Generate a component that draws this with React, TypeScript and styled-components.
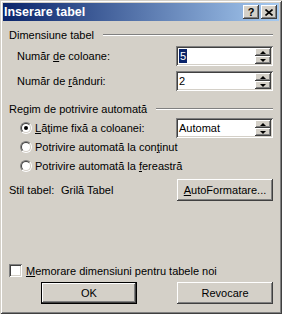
import styled, { createGlobalStyle } from "styled-components";

const GlobalStyle = createGlobalStyle`
  body {
    margin: 0;
    padding: 0;
    background: #d4d0c8;
    font-family: "Liberation Sans", Arial, Helvetica, sans-serif;
    font-size: 11px;
    color: #000;
  }
`;

const raised = `
  box-shadow: inset -1px -1px 0 #404040, inset 1px 1px 0 #ffffff,
    inset -2px -2px 0 #808080, inset 2px 2px 0 #d4d0c8;
`;

const sunken = `
  box-shadow: inset 1px 1px 0 #808080, inset -1px -1px 0 #ffffff,
    inset 2px 2px 0 #404040, inset -2px -2px 0 #d4d0c8;
`;

const Window = styled.div`
  width: 282px;
  height: 314px;
  box-sizing: border-box;
  padding: 3px;
  display: flex;
  flex-direction: column;
  background: #d4d0c8;
  box-shadow: inset 1px 1px 0 #d4d0c8, inset -1px -1px 0 #404040,
    inset 2px 2px 0 #ffffff, inset -2px -2px 0 #808080;
`;

const TitleBar = styled.div`
  height: 18px;
  display: flex;
  align-items: center;
  padding: 0 2px 0 1px;
  background: linear-gradient(90deg, #0a246a 0%, #a6caf0 100%);
`;

const TitleText = styled.div`
  flex: 1;
  color: #fff;
  font-weight: bold;
  font-size: 12.5px;
  white-space: nowrap;
`;

const TitleButton = styled.div<{ $gap?: number }>`
  width: 16px;
  height: 14px;
  box-sizing: border-box;
  margin-left: ${(p) => p.$gap ?? 0}px;
  display: flex;
  align-items: center;
  justify-content: center;
  background: #d4d0c8;
  font-weight: bold;
  font-size: 11px;
  line-height: 1;
  ${raised}
`;

const Body = styled.div`
  flex: 1;
  display: flex;
  flex-direction: column;
  padding: 0 6px 7px 6px;
`;

const GroupHeader = styled.div<{ $top: number }>`
  display: flex;
  align-items: center;
  height: 14px;
  margin-top: ${(p) => p.$top}px;
  white-space: nowrap;
`;

const GroupLine = styled.div`
  flex: 1;
  margin-left: 9px;
  border-top: 1px solid #808080;
  border-bottom: 1px solid #ffffff;
`;

const FieldRow = styled.div<{ $top: number }>`
  display: flex;
  align-items: center;
  justify-content: space-between;
  height: 20px;
  margin-top: ${(p) => p.$top}px;
  padding-left: 8px;
`;

const SpinBox = styled.div`
  width: 97px;
  height: 20px;
  box-sizing: border-box;
  padding: 2px;
  display: flex;
  background: #fff;
  ${sunken}
`;

const SpinValue = styled.div`
  flex: 1;
  display: flex;
  align-items: center;
  padding-left: 1px;
`;

const Selected = styled.span`
  background: #0a246a;
  color: #fff;
  line-height: 14px;
  padding: 0 1px;
`;

const SpinButtons = styled.div`
  width: 16px;
  display: flex;
  flex-direction: column;
`;

const SpinButton = styled.div`
  flex: 1;
  display: flex;
  align-items: center;
  justify-content: center;
  background: #d4d0c8;
  ${raised}
`;

const Arrow = styled.div<{ $down?: boolean }>`
  width: 0;
  height: 0;
  border-left: 3px solid transparent;
  border-right: 3px solid transparent;
  ${(p) =>
    p.$down ? "border-top: 3px solid #000;" : "border-bottom: 3px solid #000;"}
`;

const RadioRow = styled.div<{ $h: number; $top?: number }>`
  display: flex;
  align-items: center;
  height: ${(p) => p.$h}px;
  margin-top: ${(p) => p.$top ?? 0}px;
  padding-left: 11px;
`;

const PushRight = styled.div`
  margin-left: auto;
`;

const RadioOuter = styled.div`
  width: 12px;
  height: 12px;
  box-sizing: border-box;
  border-radius: 50%;
  border: 1px solid;
  border-color: #808080 #ffffff #ffffff #808080;
  display: flex;
  align-items: center;
  justify-content: center;
`;

const RadioInner = styled.div`
  width: 10px;
  height: 10px;
  box-sizing: border-box;
  border-radius: 50%;
  border: 1px solid;
  border-color: #404040 #d4d0c8 #d4d0c8 #404040;
  background: #fff;
  display: flex;
  align-items: center;
  justify-content: center;
`;

const RadioDot = styled.div`
  width: 4px;
  height: 4px;
  border-radius: 50%;
  background: #000;
`;

const OptionLabel = styled.span<{ $gap?: number }>`
  margin-left: ${(p) => p.$gap ?? 3}px;
  white-space: nowrap;
`;

const StyleRow = styled.div`
  display: flex;
  align-items: center;
  height: 22px;
  margin-top: 4px;
`;

const StyleCaption = styled.span`
  width: 52px;
`;

const Button = styled.div<{ $default?: boolean }>`
  width: 96px;
  height: 22px;
  box-sizing: border-box;
  display: flex;
  align-items: center;
  justify-content: center;
  background: #d4d0c8;
  margin-left: auto;
  ${(p) =>
    p.$default
      ? `border: 1px solid #000;
         box-shadow: inset -1px -1px 0 #404040, inset 1px 1px 0 #ffffff,
           inset -2px -2px 0 #808080;`
      : raised}
`;

const Spacer = styled.div`
  flex: 1;
`;

const CheckRow = styled.div`
  display: flex;
  align-items: center;
  height: 13px;
`;

const CheckBox = styled.div`
  width: 13px;
  height: 13px;
  box-sizing: border-box;
  background: #fff;
  ${sunken}
`;

const ButtonRow = styled.div`
  display: flex;
  justify-content: flex-end;
  gap: 8px;
  margin-top: 5px;
`;

function Spinner({ value, selected }: { value: string; selected?: boolean }) {
  return (
    <SpinBox>
      <SpinValue>{selected ? <Selected>{value}</Selected> : value}</SpinValue>
      <SpinButtons>
        <SpinButton>
          <Arrow />
        </SpinButton>
        <SpinButton>
          <Arrow $down />
        </SpinButton>
      </SpinButtons>
    </SpinBox>
  );
}

function Radio({ checked }: { checked?: boolean }) {
  return (
    <RadioOuter>
      <RadioInner>{checked && <RadioDot />}</RadioInner>
    </RadioOuter>
  );
}

export default function App() {
  return (
    <>
      <GlobalStyle />
      <Window>
        <TitleBar>
          <TitleText>Inserare tabel</TitleText>
          <TitleButton>?</TitleButton>
          <TitleButton $gap={2}>
            <svg width="8" height="7" viewBox="0 0 8 7">
              <path d="M0.5 0.5 L7.5 6.5 M7.5 0.5 L0.5 6.5" stroke="#000" strokeWidth="1.6" />
            </svg>
          </TitleButton>
        </TitleBar>
        <Body>
          <GroupHeader $top={7}>
            Dimensiune tabel
            <GroupLine />
          </GroupHeader>
          <FieldRow $top={4}>
            <span>
              Număr <u>d</u>e coloane:
            </span>
            <Spinner value="5" selected />
          </FieldRow>
          <FieldRow $top={5}>
            <span>
              Număr de <u>r</u>ânduri:
            </span>
            <Spinner value="2" />
          </FieldRow>

          <GroupHeader $top={11}>
            Regim de potrivire automată
            <GroupLine />
          </GroupHeader>
          <RadioRow $h={20} $top={2}>
            <Radio checked />
            <OptionLabel>
              <u>L</u>ăţime fixă a coloanei:
            </OptionLabel>
            <PushRight>
              <Spinner value="Automat" />
            </PushRight>
          </RadioRow>
          <RadioRow $h={18}>
            <Radio />
            <OptionLabel>
              Potrivire automată la con<u>ţ</u>inut
            </OptionLabel>
          </RadioRow>
          <RadioRow $h={18} $top={1}>
            <Radio />
            <OptionLabel>
              Potrivire automată la <u>f</u>ereastră
            </OptionLabel>
          </RadioRow>

          <StyleRow>
            <StyleCaption>Stil tabel:</StyleCaption>
            <span>Grilă Tabel</span>
            <Button>
              <span>
                <u>A</u>utoFormatare...
              </span>
            </Button>
          </StyleRow>

          <Spacer />

          <CheckRow>
            <CheckBox />
            <OptionLabel $gap={4}>
              <u>M</u>emorare dimensiuni pentru tabele noi
            </OptionLabel>
          </CheckRow>
          <ButtonRow>
            <Button $default>OK</Button>
            <Button>Revocare</Button>
          </ButtonRow>
        </Body>
      </Window>
    </>
  );
}
